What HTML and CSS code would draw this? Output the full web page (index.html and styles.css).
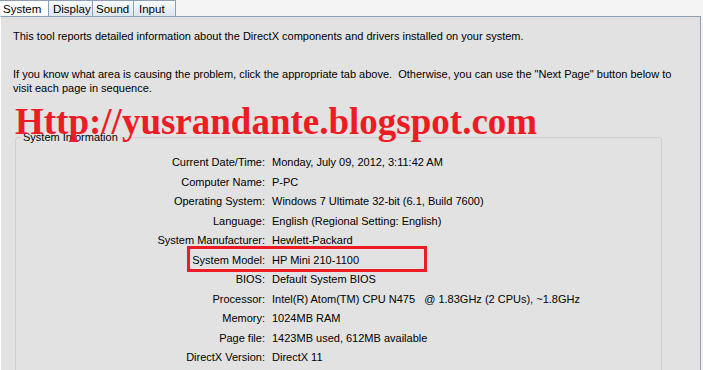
FILE: index.html
```html
<!DOCTYPE html>
<html lang="en">

<head>
    <meta charset="UTF-8">
    <title>DirectX Diagnostic Tool</title>
    <link rel="stylesheet" href="styles.css">
</head>

<body>

    <nav class="tabs">
        <button class="tab valgt system">System</button>
        <button class="tab display">Display</button>
        <button class="tab sound">Sound</button>
        <button class="tab input">Input</button>
    </nav>

    <main class="panel">
        <p class="intro">This tool reports detailed information about the DirectX components and drivers installed on your system.</p>
        <p class="intro">If you know what area is causing the problem, click the appropriate tab above.&nbsp; Otherwise, you can use the "Next Page" button below to visit each page in sequence.</p>

        <fieldset class="gruppe">
            <legend>System Information</legend>

            <dl class="info">
                <dt>Current Date/Time:</dt>
                <dd>Monday, July 09, 2012, 3:11:42 AM</dd>
                <dt>Computer Name:</dt>
                <dd>P-PC</dd>
                <dt>Operating System:</dt>
                <dd>Windows 7 Ultimate 32-bit (6.1, Build 7600)</dd>
                <dt>Language:</dt>
                <dd>English (Regional Setting: English)</dd>
                <dt>System Manufacturer:</dt>
                <dd>Hewlett-Packard</dd>
                <dt>System Model:</dt>
                <dd>HP Mini 210-1100</dd>
                <dt>BIOS:</dt>
                <dd>Default System BIOS</dd>
                <dt>Processor:</dt>
                <dd>Intel(R) Atom(TM) CPU N475&nbsp;&nbsp; @ 1.83GHz (2 CPUs), ~1.8GHz</dd>
                <dt>Memory:</dt>
                <dd>1024MB RAM</dd>
                <dt>Page file:</dt>
                <dd>1423MB used, 612MB available</dd>
                <dt>DirectX Version:</dt>
                <dd>DirectX 11</dd>
            </dl>
        </fieldset>

        <div class="ramme"></div>
        <div class="vandmaerke">Http://yusrandante.blogspot.com</div>
    </main>

</body>

</html>
```

FILE: styles.css
```css
body {
    margin: 0;
    width: 703px;
    height: 370px;
    overflow: hidden;
    background-color: #f4f4f4;
    font-family: "Liberation Sans", Arial, sans-serif;
    font-size: 11px;
    color: #000;
}

.tabs {
    display: flex;
    height: 17px;
}

.tab {
    font: inherit;
    font-size: 11.5px;
    text-align: left;
    padding: 0 0 0 4px;
    height: 17px;
    margin: 0;
    border: 1px solid #8c9fb7;
    border-left: none;
    border-bottom: none;
    background: linear-gradient(#f8fbfe, #dbe4ef);
    color: #000;
}

.system {
    width: 49px;
    padding-left: 3px;
}

.display {
    width: 44px;
}

.sound {
    width: 41px;
    padding-left: 3px;
}

.input {
    width: 42px;
    padding-left: 5px;
}

.valgt {
    background: #ffffff;
}

.panel {
    position: relative;
    height: 341px;
    overflow: hidden;
    margin-right: 2px;
    margin-top: -1px;
    border-top: 1px solid #8c9fb7;
    border-right: 1px solid #8c9fb7;
    border-left: 1px solid #ffffff;
    background-color: #e2e2e2;
    padding: 12px 0 0 12px;
}

.intro {
    margin: 0 0 24px 0;
    width: 665px;
    line-height: 14px;
}

.gruppe {
    margin: 36px 0 0 2px;
    width: 645px;
    height: 260px;
    border: 1px solid #d0d0d0;
    border-radius: 3px;
    padding: 0;
}

legend {
    padding: 0 2px;
    margin-left: 5px;
}

.info {
    display: grid;
    grid-template-columns: 249px auto;
    column-gap: 7px;
    margin: 10px 0 0 0;
    line-height: 19.5px;
}

dt {
    text-align: right;
}

dd {
    margin: 0;
}

.ramme {
    position: absolute;
    left: 186px;
    top: 229px;
    width: 234px;
    height: 20px;
    border: 3px solid #ed1c24;
}

.vandmaerke {
    position: absolute;
    left: 14px;
    top: 83px;
    font-family: "Liberation Serif", "Times New Roman", serif;
    font-weight: bold;
    font-size: 37px;
    color: #ed1c24;
}
```
